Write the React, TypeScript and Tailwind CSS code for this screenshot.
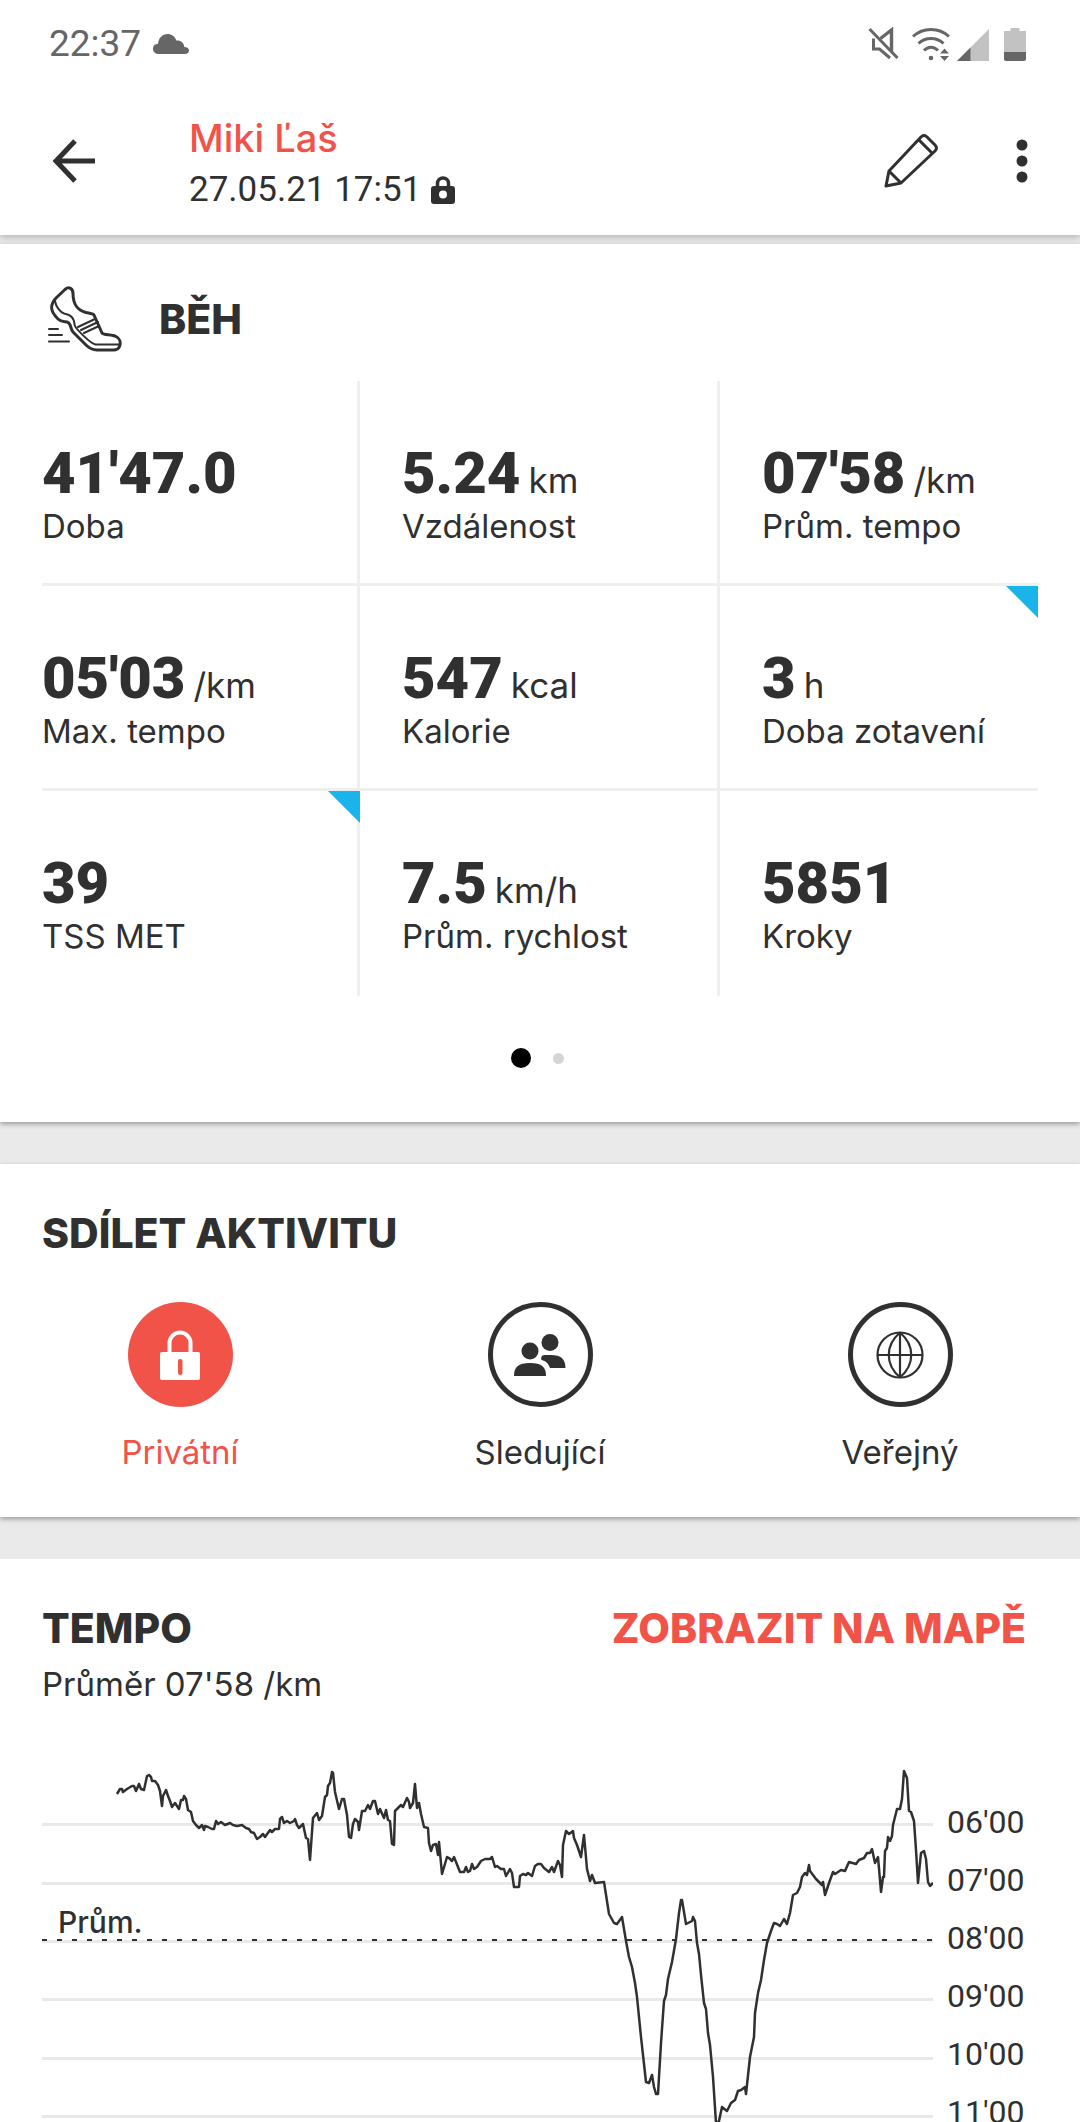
import { useState } from 'react';
import type { ReactNode } from 'react';

interface Stat {
  value: string;
  unit?: string;
  label: string;
  flagged?: boolean;
}

const stats: Stat[] = [
  { value: "41'47.0", label: 'Doba' },
  { value: '5.24', unit: 'km', label: 'Vzdálenost' },
  { value: "07'58", unit: '/km', label: 'Prům. tempo' },
  { value: "05'03", unit: '/km', label: 'Max. tempo' },
  { value: '547', unit: 'kcal', label: 'Kalorie' },
  { value: '3', unit: 'h', label: 'Doba zotavení', flagged: true },
  { value: '39', label: 'TSS MET', flagged: true },
  { value: '7.5', unit: 'km/h', label: 'Prům. rychlost' },
  { value: '5851', label: 'Kroky' },
];

const paceLabels = ["06'00", "07'00", "08'00", "09'00", "10'00", "11'00"];
const gridLines = [64, 123, 181, 239, 298, 356];

const pacePoints =
  '75,34 78,29 80,29 81,32 85,29 90,26 92,26 94,31 97,24 99,29 102,30 105,16 107,15 109,17 110,21 113,21 116,25 118,31 120,46 121,36 124,30 126,36 128,41 130,47 133,43 137,49 139,40 141,40 142,36 144,39 146,50 149,52 151,61 154,65 157,68 160,65 162,70 163,66 166,67 170,69 172,69 174,61 176,64 179,62 183,65 188,63 191,65 195,66 200,65 204,68 207,69 209,72 212,73 215,79 218,77 221,74 223,77 228,70 230,72 233,69 237,69 238,59 240,57 242,63 245,61 248,63 252,61 253,59 255,65 257,68 261,64 264,78 266,79 268,100 271,58 275,53 277,60 280,56 283,37 285,35 286,26 288,23 290,12 291,13 293,32 297,49 300,39 302,39 305,55 307,77 309,78 311,64 313,59 316,62 317,70 320,51 323,51 326,45 328,49 331,41 333,41 336,54 338,49 342,58 344,50 346,60 348,61 350,84 352,85 353,51 359,45 361,47 365,38 367,42 368,48 371,43 373,24 375,48 377,43 379,54 382,67 386,68 387,83 389,91 391,85 394,84 396,95 397,82 400,114 405,97 407,98 410,101 412,97 418,112 422,112 424,107 426,112 428,111 430,104 432,109 435,107 439,101 443,99 448,99 450,97 453,107 455,106 459,109 462,109 464,116 468,109 470,113 472,127 477,127 478,116 481,114 484,115 486,113 490,116 493,106 496,104 499,104 502,108 507,112 510,107 512,112 516,101 518,105 520,117 521,85 524,71 527,74 531,71 532,78 535,85 539,97 542,75 545,109 548,121 550,115 553,123 562,122 567,154 572,163 575,164 580,157 584,181 587,197 590,207 593,223 595,237 599,277 604,322 607,323 610,315 612,327 614,334 616,334 619,283 622,241 624,235 626,219 630,202 634,179 637,153 639,140 640,140 644,164 650,161 651,157 653,161 655,183 657,194 659,215 662,243 664,249 666,273 668,285 671,317 674,363 677,361 680,347 685,351 689,343 693,340 696,331 699,330 703,327 704,334 708,297 712,277 713,253 716,233 719,220 722,200 725,183 729,171 732,163 735,164 738,166 742,159 745,164 748,153 751,135 755,133 758,127 760,117 763,113 765,115 767,105 768,111 774,119 780,125 781,122 783,135 787,123 791,112 793,114 799,110 803,111 807,102 814,104 817,100 822,98 825,93 828,93 830,89 833,103 836,97 839,132 841,117 842,117 843,91 845,88 846,77 848,81 850,76 851,65 855,49 858,49 860,39 862,11 865,18 867,51 869,52 872,61 874,90 876,123 879,93 882,91 884,99 886,122 888,126 891,123';

const StatusBar = () => (
  <div className="flex h-[88px] items-center justify-between pl-[49px] pr-[54px] text-[#666]">
    <div className="flex items-center gap-3">
      <span className="font-[Roboto,sans-serif] text-[37px] leading-[44px]">22:37</span>
      <svg className="h-5 w-9" viewBox="0 0 36 20" fill="currentColor" aria-hidden="true">
        <path d="M5 20a5 5 0 0 1-5-5.500C0 11.500 2 10 5 9.800 5.600 3.900 9.500 0 14.600 0c4 0 7.500 2.600 8.700 6.500 4.500-.4 7.500 2 8 6.500C34 12.900 36 14.300 36 16.500S34.300 20 32 20z" />
      </svg>
    </div>
    <div className="flex items-center gap-3" aria-hidden="true">
      <svg className="h-[34px] w-8" viewBox="0 0 32 34" fill="none" stroke="currentColor" strokeWidth="3">
        <path d="M1.500 2l28 29" />
        <path d="M12.500 11.500l11-8.500v21.500" strokeWidth="3.400" />
        <path d="M5.500 11.500v10.500h6l10.500 9" />
      </svg>
      <svg className="h-[34px] w-[38px]" viewBox="0 0 38 34" fill="none" stroke="currentColor" strokeWidth="3">
        <path d="M1 9.500c10-9.400 26-9.400 36 0M6.500 16.500c7-6.700 18-6.700 25 0M12 23.500c4-4.500 10-4.500 14 0" />
        <circle cx="19" cy="31" r="2.300" fill="currentColor" stroke="none" />
        <path d="M32.500 21.500l4.500 5h-9zM32.500 34l4.500-5h-9z" fill="currentColor" stroke="none" />
      </svg>
      <svg className="-ml-[5px] h-[34px] w-8" viewBox="0 0 32 34" fill="currentColor">
        <path d="M32 2v32H0z" fill="#c2c2c2" />
        <path d="M13.500 20.500V34H0z" />
      </svg>
      <svg className="ml-[3px] h-[34px] w-[22px]" viewBox="0 0 22 34" fill="currentColor">
        <path d="M6.500 1h9v3H22v21H0V4h6.500z" fill="#c2c2c2" />
        <path d="M0 25h22v7a2 2 0 0 1-2 2H2a2 2 0 0 1-2-2z" />
      </svg>
    </div>
  </div>
);

const Header = () => (
  <header className="flex h-[147px] items-center pb-[1px] pl-[52px] pr-[43px]">
    <button type="button" aria-label="Zpět" className="mr-[93px]">
      <svg className="h-[44px] w-[44px]" viewBox="0 0 44 44" fill="none" stroke="currentColor" strokeWidth="5">
        <path d="M43 22H5M23 2L4 22l19 20" />
      </svg>
    </button>
    <div className="flex-1 pt-[6px]">
      <h1 className="text-[38px] font-medium leading-[50px] text-[#f15349]">Miki Ľaš</h1>
      <p className="mt-[2px] flex items-center gap-[10px] font-[Roboto,sans-serif] text-[35px] leading-[50px]">
        27.05.21 17:51
        <svg className="h-7 w-6" viewBox="0 0 24 28" aria-label="Soukromé">
          <path d="M6.500 12V7.500a5.500 5.500 0 0 1 11 0V12" fill="none" stroke="currentColor" strokeWidth="3.500" />
          <path
            fill="currentColor"
            fillRule="evenodd"
            d="M3 10h18a3 3 0 0 1 3 3v12a3 3 0 0 1-3 3H3a3 3 0 0 1-3-3V13a3 3 0 0 1 3-3zm9 4.500a4 4 0 1 0 0 8 4 4 0 0 0 0-8z"
          />
        </svg>
      </p>
    </div>
    <button type="button" aria-label="Upravit" className="mr-[69px]">
      <svg className="h-[54px] w-[54px]" viewBox="0 0 54 54" fill="none" stroke="currentColor" strokeWidth="3" strokeLinejoin="round">
        <path d="M2 52l3-15L37 3q3-3 6 0l8 8q3 3 0 6L17 49zM5 37l12 12M35 6l13 13" />
      </svg>
    </button>
    <button type="button" aria-label="Další možnosti" className="px-2">
      <svg className="h-[44px] w-[14px]" viewBox="0 0 14 44" fill="currentColor">
        <circle cx="7" cy="6" r="5.500" />
        <circle cx="7" cy="22" r="5.500" />
        <circle cx="7" cy="38" r="5.500" />
      </svg>
    </button>
  </header>
);

const ShoeIcon = () => (
  <svg className="h-[66px] w-[74px]" viewBox="0 0 74 66" fill="none" stroke="currentColor" strokeWidth="3" strokeLinejoin="round" strokeLinecap="round" aria-hidden="true">
    <path d="M8 12L17 3.500c4-3.500 8-1 8 4 0 13 6 17 13 19 4 1 7 .5 8 2.500l8 18c1 2 10 1.500 14 3.500 4 2 5 6 3.500 10-1 2.500-3 3.500-6 3.500H49c-5 0-8-2-11-5L25 46c-3-3-1.500-9-6-10-4-.5-6 0-9-3-7-7-9-13-2-21z" />
    <path d="M7 15c1 6 5 11 9 12.500 7 1.500 10 4 10.500 11 .5 4 16 19 21 20H71" strokeWidth="2" />
    <path d="M30 41l17-8M33 44l17-8M36 47l15-7" strokeWidth="2" />
    <path d="M1 43h9M1 49h13M1 55.500h20" strokeWidth="2" />
  </svg>
);

const StatGrid = () => (
  <dl className="mx-[42px] grid grid-cols-[318fr_360fr_318fr]">
    {stats.map((stat, i) => (
      <div
        key={stat.label}
        className={`relative flex h-[205px] flex-col-reverse justify-end border-[#efefef] pt-[61px] ${i < 6 ? 'border-b-3' : ''} ${
          i % 3 < 2 ? 'border-r-3' : ''
        } ${i % 3 > 0 ? 'pl-[42px]' : ''}`}
      >
        <dt className="text-[33px] leading-10">{stat.label}</dt>
        <dd className="flex h-[64px] items-baseline gap-2">
          <span className="font-[Roboto,sans-serif] text-[58px] font-black leading-[62px]">{stat.value}</span>
          {stat.unit && <span className="text-[35px] leading-10">{stat.unit}</span>}
        </dd>
        {stat.flagged && (
          <svg className={`absolute top-0 h-8 w-8 ${i % 3 < 2 ? '-right-[3px]' : 'right-0'}`} viewBox="0 0 32 32" aria-hidden="true">
            <path d="M0 0h32v32z" fill="#1ab4eb" />
          </svg>
        )}
      </div>
    ))}
  </dl>
);

const LockIcon = () => (
  <svg className="h-[50px] w-10" viewBox="0 0 40 50" aria-hidden="true">
    <path d="M9.500 24V13a10.500 10.500 0 0 1 21 0V24" fill="none" stroke="currentColor" strokeWidth="4" />
    <rect y="22" width="40" height="28" rx="2" fill="currentColor" />
    <rect x="18" y="29" width="4.500" height="16" rx="2.200" fill="#f15349" />
  </svg>
);

const PeopleIcon = () => (
  <svg className="h-[42px] w-[52px]" viewBox="0 0 52 42" fill="currentColor" aria-hidden="true">
    <circle cx="16" cy="17" r="8.500" />
    <circle cx="36" cy="8.500" r="8.500" />
    <path d="M0 42c0-9 4-13 16-13s16 4 16 13z" />
    <path d="M27.500 26c-1-2 0-5 3-5h6c11 0 15 4.500 15 13H36c-1.500-4.500-4-7-8.500-8z" />
  </svg>
);

const GlobeIcon = () => (
  <svg className="h-12 w-12" viewBox="0 0 48 48" fill="none" stroke="currentColor" strokeWidth="2.200" aria-hidden="true">
    <circle cx="24" cy="24" r="22.500" />
    <path d="M24 1.500v45M1.500 24h45M24 1.500c-15 13-15 32 0 45M24 1.500c15 13 15 32 0 45" />
  </svg>
);

const shareOptions: { id: string; label: string; icon: ReactNode }[] = [
  { id: 'private', label: 'Privátní', icon: <LockIcon /> },
  { id: 'followers', label: 'Sledující', icon: <PeopleIcon /> },
  { id: 'public', label: 'Veřejný', icon: <GlobeIcon /> },
];

const ShareSection = () => {
  const [selected, setSelected] = useState('private');

  return (
    <section className="mt-[42px] shrink-0 bg-white pb-[44px] pt-[44px] shadow-[0_2px_5px_rgba(0,0,0,0.35)]">
      <h2 className="px-[42px] text-[41px] font-extrabold leading-[50px]">SDÍLET AKTIVITU</h2>
      <div className="mt-[44px] grid grid-cols-3">
        {shareOptions.map((option) => {
          const active = option.id === selected;
          return (
            <button
              key={option.id}
              type="button"
              aria-pressed={active}
              onClick={() => setSelected(option.id)}
              className={`flex flex-col items-center gap-6 ${active ? 'text-[#f15349]' : ''}`}
            >
              <span
                className={`flex h-[105px] w-[105px] items-center justify-center rounded-full ${
                  active ? 'bg-[#f15349] text-white' : 'border-5 border-[#303030]'
                }`}
              >
                {option.icon}
              </span>
              <span className="text-[33px] leading-[42px]">{option.label}</span>
            </button>
          );
        })}
      </div>
    </section>
  );
};

const PaceChart = () => (
  <div className="flex h-[362px] pl-[42px] pr-[54px]">
    <div className="relative flex-1">
      <svg className="h-full w-full" viewBox="0 0 891 362" preserveAspectRatio="none" fill="none" role="img" aria-label="Graf tempa">
        {gridLines.map((y) => (
          <path key={y} d={`M0 ${y}.500H891`} stroke="#e9e9e9" strokeWidth="3" />
        ))}
        <path d="M0 180H891" stroke="#303030" strokeWidth="2" strokeDasharray="5 10" />
        <polyline points={pacePoints} stroke="#303030" strokeWidth="2.500" strokeLinejoin="round" />
      </svg>
      <span className="absolute left-4 top-[142px] text-[30px] font-medium leading-10">Prům.</span>
    </div>
    <div className="ml-[14px] flex h-[350px] w-[79px] flex-col justify-between pt-[33px] font-[Roboto,sans-serif] text-[32px]">
      {paceLabels.map((label) => (
        <span key={label} className="leading-[58px]">
          {label}
        </span>
      ))}
    </div>
  </div>
);

const App = () => {
  return (
    <div className="flex h-screen flex-col overflow-hidden bg-[#eaeaea] font-[Inter,'Liberation_Sans',sans-serif] text-[#303030]">
      <div className="relative shrink-0 bg-white shadow-[0_3px_6px_rgba(0,0,0,0.2)]">
        <StatusBar />
        <Header />
      </div>

      <section className="mt-[9px] shrink-0 bg-white pb-[54px] pt-[42px] shadow-[0_2px_5px_rgba(0,0,0,0.35)]">
        <div className="flex h-[66px] items-center gap-[37px] px-12">
          <ShoeIcon />
          <h2 className="text-[41px] font-extrabold leading-[50px]">BĚH</h2>
        </div>
        <div className="mt-[29px]">
          <StatGrid />
        </div>
        <div className="mt-[52px] flex items-center justify-center gap-[22px] pr-[6px]">
          <span className="h-5 w-5 rounded-full bg-black" />
          <span className="h-[11px] w-[11px] rounded-full bg-[#d5d5d5]" />
        </div>
      </section>

      <ShareSection />

      <section className="mt-[42px] min-h-0 flex-1 bg-white pt-[44px]">
        <div className="flex justify-between pl-[42px] pr-[54px] text-[41px] font-extrabold leading-[50px]">
          <h2>TEMPO</h2>
          <a href="#mapa" className="text-[#f15349]">
            ZOBRAZIT NA MAPĚ
          </a>
        </div>
        <p className="mb-[51px] mt-[6px] px-[42px] text-[33px] leading-[50px]">Průměr 07'58 /km</p>
        <PaceChart />
      </section>
    </div>
  );
};

export default App;
